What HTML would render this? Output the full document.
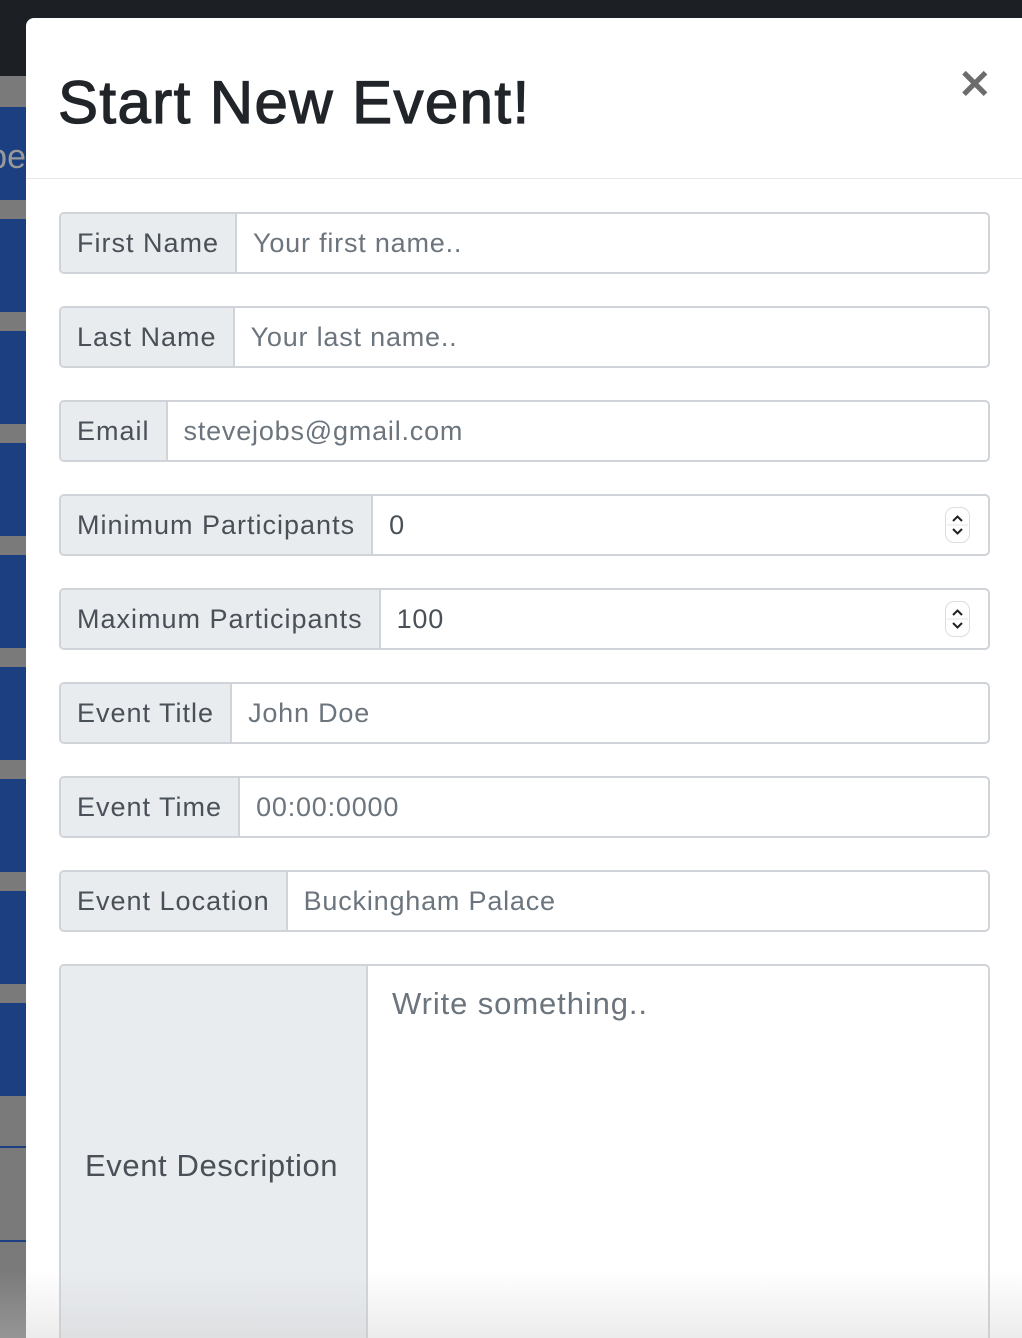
<!DOCTYPE html>
<html style="overflow:hidden;width:1022px;height:1338px"><head><style>
*{box-sizing:border-box;margin:0;padding:0}
body{width:1022px;height:1338px;overflow:hidden;background:#1c1f23;font-family:"Liberation Sans",sans-serif;position:relative}
.strip{position:absolute;left:0;width:26px}
.modal{position:absolute;left:26px;top:18px;width:996px;height:1320px;background:#fff;border-top-left-radius:8px;overflow:hidden}
.hdr{height:161px;border-bottom:1px solid #e5e7ea;position:relative}
.hdr h1{position:absolute;left:32px;top:50px;font-size:60px;font-weight:normal;-webkit-text-stroke:1.2px #212529;color:#212529;letter-spacing:1.4px}
.x{position:absolute;left:932px;top:44px;font-size:40px;font-weight:bold;color:#6c6c6c}
.row{position:absolute;left:33px;width:931px;height:62px;border:2px solid #d0d4d8;border-radius:5px;display:flex;overflow:hidden}
.lab{background:#e9ecef;color:#495057;font-size:27px;letter-spacing:1px;padding:0 16px;display:flex;align-items:center;border-right:2px solid #d0d4d8;white-space:nowrap}
.val{flex:1;color:#495057;font-size:27px;letter-spacing:0.8px;padding:0 16px;display:flex;align-items:center;position:relative}
.ph{color:#6c757d}
.spin{position:absolute;right:18px;top:11px;width:25px;height:36px;border:1px solid #ddd;border-radius:9px}
.fade{position:absolute;left:0;top:1270px;width:1022px;height:68px;background:linear-gradient(rgba(255,255,255,0),rgba(200,200,200,0.35))}
</style></head><body>
<div class="strip" style="top:76px;height:1262px;background:#7a7a7a"></div>
<div class="strip" style="top:107px;height:93px;background:#1b3f80"></div>
<div class="strip" style="top:219px;height:93px;background:#1b3f80"></div>
<div class="strip" style="top:331px;height:93px;background:#1b3f80"></div>
<div class="strip" style="top:443px;height:93px;background:#1b3f80"></div>
<div class="strip" style="top:555px;height:93px;background:#1b3f80"></div>
<div class="strip" style="top:667px;height:93px;background:#1b3f80"></div>
<div class="strip" style="top:779px;height:93px;background:#1b3f80"></div>
<div class="strip" style="top:891px;height:93px;background:#1b3f80"></div>
<div class="strip" style="top:1003px;height:93px;background:#1b3f80"></div>
<div class="strip" style="top:1146px;height:2px;background:#1b3f80"></div>
<div class="strip" style="top:1240px;height:2px;background:#1b3f80"></div>
<div style="position:absolute;left:0;top:138px;font-size:34px;color:#999;width:26px;overflow:hidden;white-space:nowrap;direction:rtl">pe</div>
<div class="modal">
<div class="hdr"><h1>Start New Event!</h1><div class="x">✕</div></div>
<div class="row" style="top:194px"><div class="lab">First Name</div><div class="val ph">Your first name..</div></div>
<div class="row" style="top:288px"><div class="lab">Last Name</div><div class="val ph">Your last name..</div></div>
<div class="row" style="top:382px"><div class="lab">Email</div><div class="val ph">stevejobs@gmail.com</div></div>
<div class="row" style="top:476px"><div class="lab">Minimum Participants</div><div class="val">0<div class="spin"><svg width="23" height="34" viewBox="0 0 23 34"><path d="M7 13l4.5-4.5L16 13M7 21l4.5 4.5L16 21" fill="none" stroke="#222" stroke-width="2"/><path d="M1 17h21" stroke="#e5e5e5"/></svg></div></div></div>
<div class="row" style="top:570px"><div class="lab">Maximum Participants</div><div class="val">100<div class="spin"><svg width="23" height="34" viewBox="0 0 23 34"><path d="M7 13l4.5-4.5L16 13M7 21l4.5 4.5L16 21" fill="none" stroke="#222" stroke-width="2"/><path d="M1 17h21" stroke="#e5e5e5"/></svg></div></div></div>
<div class="row" style="top:664px"><div class="lab">Event Title</div><div class="val ph">John Doe</div></div>
<div class="row" style="top:758px"><div class="lab">Event Time</div><div class="val ph">00:00:0000</div></div>
<div class="row" style="top:852px"><div class="lab">Event Location</div><div class="val ph">Buckingham Palace</div></div>
<div class="row" style="top:946px;height:420px"><div class="lab" style="width:307px;padding:0 24px;font-size:31px;letter-spacing:0.6px;padding-bottom:16px">Event Description</div><div class="val ph" style="align-items:flex-start;padding:20px 24px;font-size:31px;letter-spacing:0.9px">Write something..</div></div>
</div>
<div class="fade"></div>
</body></html>
